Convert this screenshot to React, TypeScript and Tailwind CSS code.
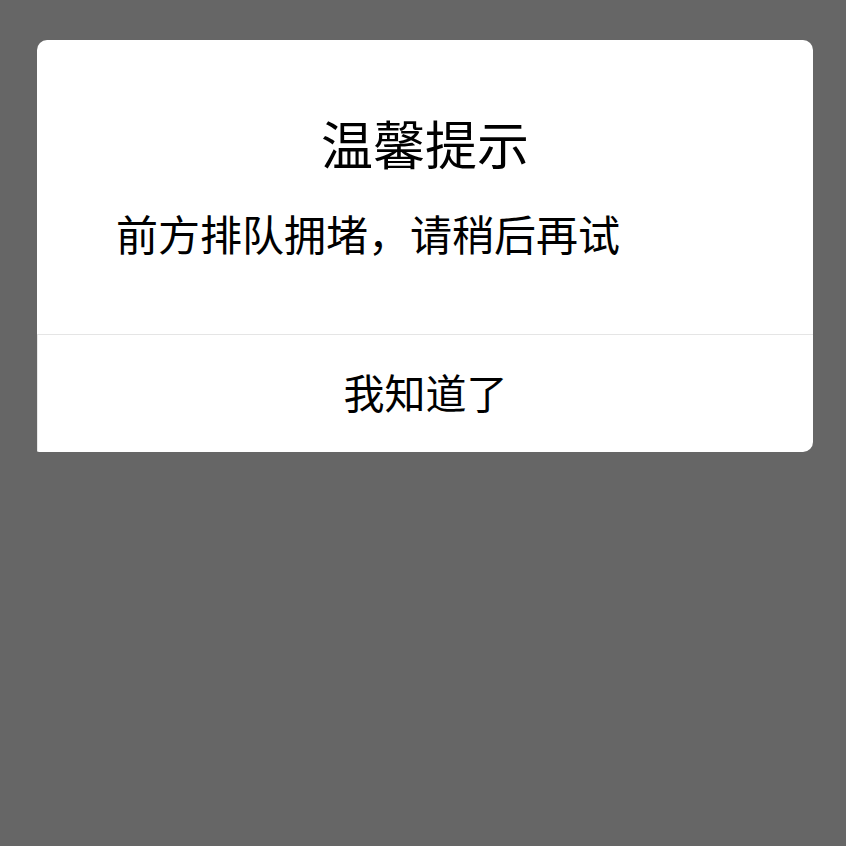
export default function App() {
  const font = { fontFamily: '"Noto Sans CJK SC", "Noto Sans", sans-serif' };
  return (
    <div className="h-[846px] w-[846px] bg-[#666666] pt-[40px] pl-[37px]" style={font}>
      <div className="w-[776px] rounded-[10px] rounded-bl-[2px] bg-white">
        <div className="pt-[77px] text-center text-[52px] leading-[52px] text-black">温馨提示</div>
        <div className="mt-[43px] pl-[79px] pb-[80px] text-[42px] leading-[42px] text-black">
          前方排队拥堵，请稍后再试
        </div>
        <div className="h-px bg-[#e5e5e5]" />
        <div className="flex h-[117px] items-center justify-center border-l border-[#e8e8e8] rounded-bl-[2px] pb-[5px] text-[41px] leading-[41px] text-black">
          我知道了
        </div>
      </div>
    </div>
  );
}
